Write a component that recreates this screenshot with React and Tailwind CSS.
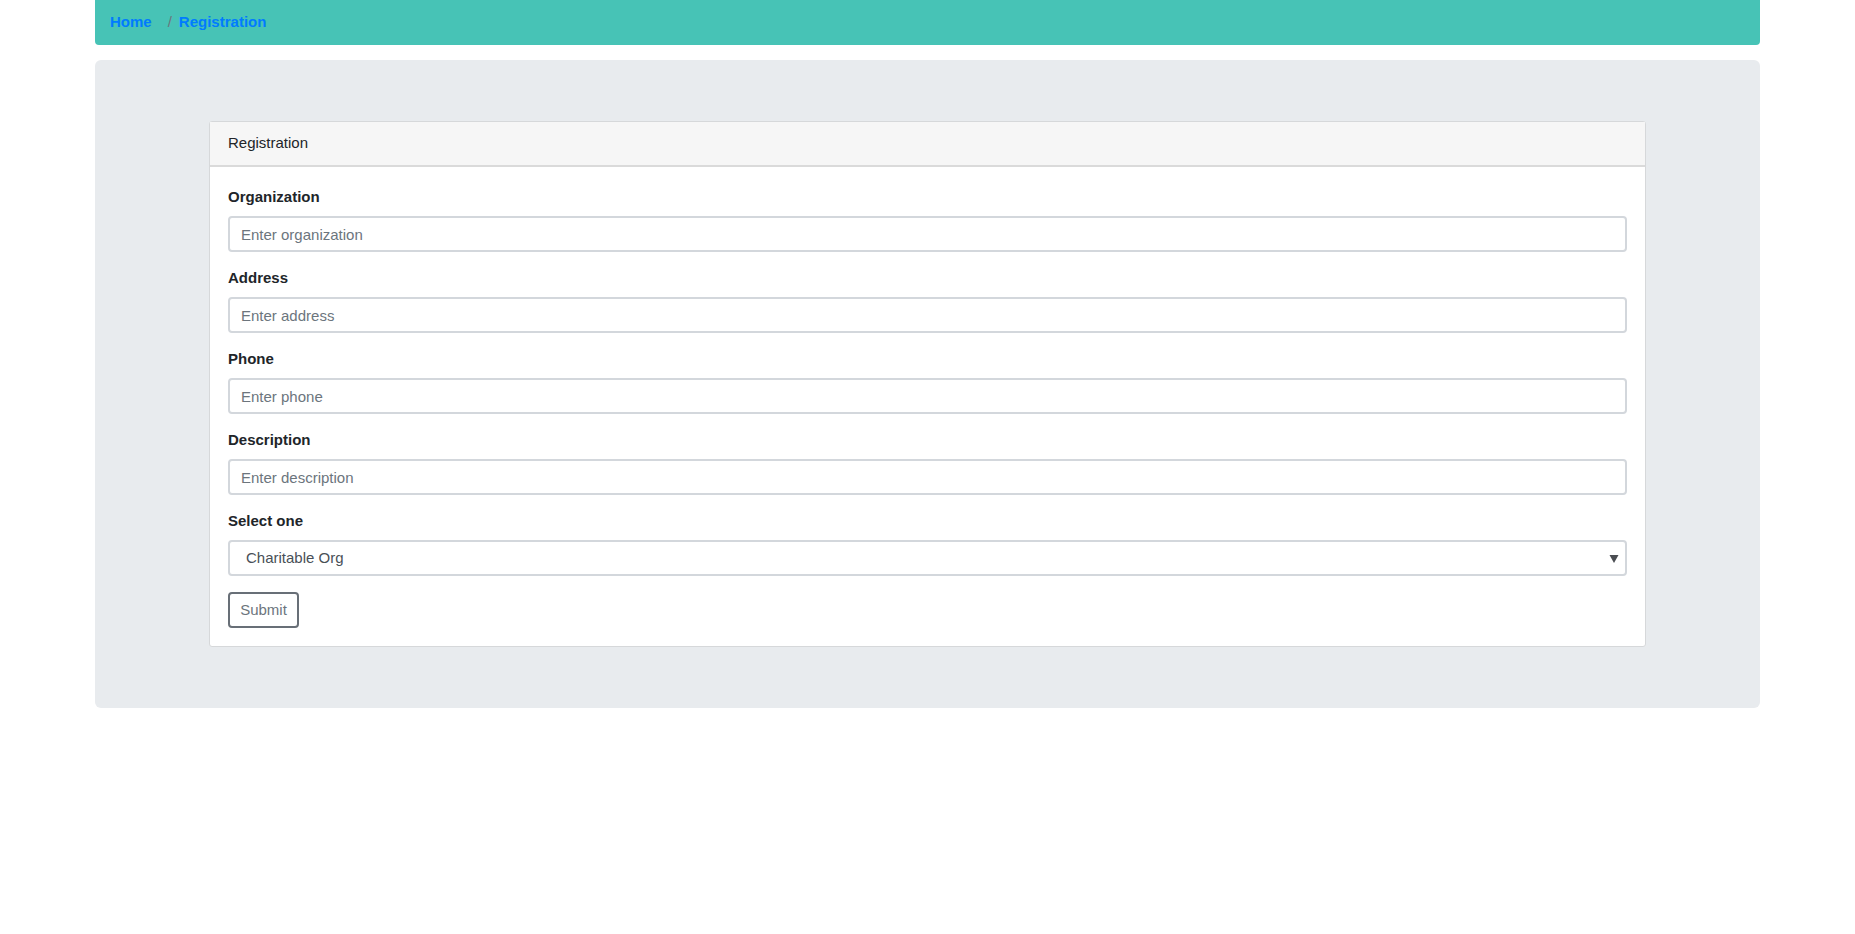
import React from "react";

function Field({ label, placeholder }) {
  return (
    <div className="mb-[15px]">
      <label className="block font-bold text-[15px] leading-[22.5px] text-[#212529] mb-[7.5px]">{label}</label>
      <input
        placeholder={placeholder}
        className="block w-full h-[36px] px-[11px] text-[15px] bg-white border-2 border-[#d3d7dc] rounded-[4px] text-[#495057] placeholder:text-[#6c757d] outline-none"
      />
    </div>
  );
}

export default function App() {
  return (
    <div className="min-h-screen bg-white" style={{ fontFamily: '"Liberation Sans", Arial, sans-serif' }}>
      <div className="w-[1665px] mx-auto">
        <nav className="h-[45px] bg-[#47c3b6] rounded-b-[4px] flex items-center px-[15px] text-[15px] font-bold">
          <span className="text-[#007bff]">Home</span>
          <span className="text-[#6c757d] ml-[16px] mr-[7px] font-normal">/</span>
          <span className="text-[#007bff]">Registration</span>
        </nav>
        <div className="mt-[15px] bg-[#e8ebee] rounded-[6px] px-[114px] pt-[61px] pb-[61px]">
          <div className="bg-white border border-[#d6d8da] rounded-[3px]">
            <div className="h-[45px] bg-[#f6f6f6] border-b-2 border-[#dadada] px-[18px] flex items-center text-[15px] text-[#212529]">
              Registration
            </div>
            <div className="px-[18px] pt-[19px] pb-[18px]">
              <Field label="Organization" placeholder="Enter organization" />
              <Field label="Address" placeholder="Enter address" />
              <Field label="Phone" placeholder="Enter phone" />
              <Field label="Description" placeholder="Enter description" />
              <div className="mb-[16px]">
                <label className="block font-bold text-[15px] leading-[22.5px] text-[#212529] mb-[7.5px]">Select one</label>
                <div className="relative h-[36px] w-full border-2 border-[#d3d7dc] rounded-[4px] bg-white flex items-center pl-[16px] text-[15px] text-[#495057]">
                  Charitable Org
                  <svg className="absolute right-[6px] top-[12px]" width="10" height="10" viewBox="0 0 10 10">
                    <path d="M0.5 1 L9.5 1 L5 9 Z" fill="#4a4d52" />
                  </svg>
                </div>
              </div>
              <button className="h-[36px] w-[71px] border-2 border-[#686f77] rounded-[4px] text-[15px] text-[#6c757d] bg-white">
                Submit
              </button>
            </div>
          </div>
        </div>
      </div>
    </div>
  );
}
